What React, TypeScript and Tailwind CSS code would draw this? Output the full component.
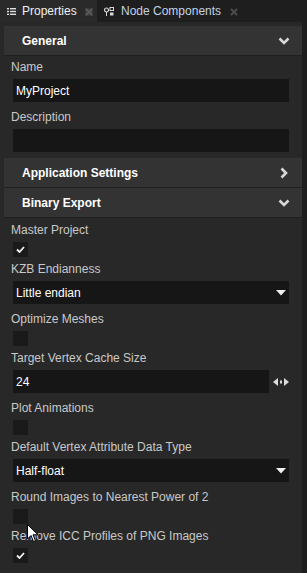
import type { ReactNode } from "react";

const FONT = { fontFamily: '"Liberation Sans", Arial, sans-serif' };

function ChevronDown() {
  return (
    <svg width="12" height="8" viewBox="0 0 12 8">
      <polyline points="1.5,1.5 6,6 10.5,1.5" fill="none" stroke="#d8d8d8" strokeWidth="2.6" />
    </svg>
  );
}

function ChevronRight() {
  return (
    <svg width="8" height="12" viewBox="0 0 8 12">
      <polyline points="1.5,1.5 6,6 1.5,10.5" fill="none" stroke="#d8d8d8" strokeWidth="2.6" />
    </svg>
  );
}

function Header({ title, open }: { title: string; open: boolean }) {
  return (
    <div className="ml-1 flex h-[30px] items-center justify-between border-b border-[#1f1f1f] bg-[#333333] pl-[18px] pr-3">
      <span className="text-[12px] font-bold text-white">{title}</span>
      <span className="flex w-3 justify-center">{open ? <ChevronDown /> : <ChevronRight />}</span>
    </div>
  );
}

function Label({ children }: { children: ReactNode }) {
  return <div className="mb-[2px] h-[19px] pl-[11px] text-[12px] leading-[19px] text-[#c8c8c8]">{children}</div>;
}

function TextProp({ label, value = "" }: { label: string; value?: string }) {
  return (
    <div className="mb-[6px]">
      <Label>{label}</Label>
      <div className="ml-[13px] flex h-[23px] w-[276px] items-center bg-[#161616] pl-[3px] text-[12px] text-white">
        {value}
      </div>
    </div>
  );
}

function SelectProp({ label, value }: { label: string; value: string }) {
  return (
    <div className="mb-[6px]">
      <Label>{label}</Label>
      <div className="ml-[13px] flex h-[23px] w-[276px] items-center justify-between bg-[#161616] pl-[3px] pr-[3px] text-[12px] text-white">
        <span>{value}</span>
        <svg width="10" height="6" viewBox="0 0 10 6">
          <polygon points="0,0 10,0 5,5.5" fill="#f0f0f0" />
        </svg>
      </div>
    </div>
  );
}

function CheckProp({ label, checked }: { label: string; checked: boolean }) {
  return (
    <div className="mb-[3px]">
      <Label>{label}</Label>
      <div className="ml-[13px] flex h-[15px] w-[15px] items-center justify-center bg-[#1a1a1a]">
        {checked && (
          <svg width="9" height="7" viewBox="0 0 9 7">
            <polyline points="1,3.5 3.5,6 8,1" fill="none" stroke="#f0f0f0" strokeWidth="1.8" />
          </svg>
        )}
      </div>
    </div>
  );
}

export default function App() {
  return (
    <div className="relative flex h-[573px] w-[307px] flex-col overflow-hidden bg-[#1e1e1e]" style={FONT}>
      {/* Tabs */}
      <div className="flex h-[22px] items-stretch text-[12px]">
        <div className="flex w-[97px] items-center bg-[#2a2a2a] pl-[7px]">
          <svg width="9" height="7" viewBox="0 0 9 7" className="mr-[6px]">
            <rect x="0" y="0" width="2" height="1.4" fill="#e0e0e0" />
            <rect x="3" y="0" width="6" height="1.4" fill="#e0e0e0" />
            <rect x="0" y="2.8" width="2" height="1.4" fill="#e0e0e0" />
            <rect x="3" y="2.8" width="6" height="1.4" fill="#e0e0e0" />
            <rect x="0" y="5.6" width="2" height="1.4" fill="#e0e0e0" />
            <rect x="3" y="5.6" width="6" height="1.4" fill="#e0e0e0" />
          </svg>
          <span className="text-[#f0f0f0]">Properties</span>
          <svg width="8" height="8" viewBox="0 0 8 8" className="ml-[8px] mt-[2px]">
            <rect width="8" height="8" fill="#3a3a3a" />
            <path d="M1,1 L7,7 M7,1 L1,7" stroke="#5a5a5a" strokeWidth="1.8" />
          </svg>
        </div>
        <div className="flex items-center pl-[7px]">
          <svg width="10" height="9" viewBox="0 0 10 9" className="mr-[7px]">
            <circle cx="2.5" cy="3" r="2" fill="none" stroke="#d8d8d8" strokeWidth="1.2" />
            <rect x="2" y="5" width="1" height="4" fill="#d8d8d8" />
            <rect x="6" y="0.5" width="3.5" height="3" fill="none" stroke="#d8d8d8" strokeWidth="1" />
            <rect x="6" y="5.5" width="3.5" height="3" fill="#d8d8d8" />
          </svg>
          <span className="text-[#c3d3e6]">Node Components</span>
          <svg width="8" height="8" viewBox="0 0 8 8" className="ml-[9px] mt-[2px]">
            <path d="M1,1 L7,7 M7,1 L1,7" stroke="#4e4e4e" strokeWidth="1.8" />
          </svg>
        </div>
      </div>

      <div className="flex flex-1">
        <div className="w-[302px] bg-[#282828] pt-1">
          <Header title="General" open />
          <div className="pt-[2px]">
            <TextProp label="Name" value="MyProject" />
            <TextProp label="Description" />
          </div>
          <Header title="Application Settings" open={false} />
          <Header title="Binary Export" open />
          <div className="pt-[3px]">
            <CheckProp label="Master Project" checked />
            <SelectProp label="KZB Endianness" value="Little endian" />
            <CheckProp label="Optimize Meshes" checked={false} />
            <div className="mb-[6px]">
              <Label>Target Vertex Cache Size</Label>
              <div className="ml-[13px] flex items-center">
                <div className="flex h-[23px] w-[256px] items-center bg-[#161616] pl-[3px] text-[12px] text-white">24</div>
                <svg width="16" height="8" viewBox="0 0 16 8" className="ml-[4px]">
                  <polygon points="0,4 5,0 5,8" fill="#dcdcdc" />
                  <rect x="7" y="2.5" width="2" height="3" fill="#dcdcdc" />
                  <polygon points="16,4 11,0 11,8" fill="#dcdcdc" />
                </svg>
              </div>
            </div>
            <CheckProp label="Plot Animations" checked={false} />
            <SelectProp label="Default Vertex Attribute Data Type" value="Half-float" />
            <CheckProp label="Round Images to Nearest Power of 2" checked={false} />
            <CheckProp label="Remove ICC Profiles of PNG Images" checked />
          </div>
        </div>
        <div className="w-[5px] bg-[#1e1e1e]" />
      </div>

      {/* mouse cursor */}
      <svg width="12" height="19" viewBox="0 0 12 19" className="absolute left-[27px] top-[524px]">
        <path d="M0.5,0.5 L0.5,15 L4,11.5 L6.5,17.5 L8.5,16.7 L6,10.8 L11,10.8 Z" fill="#ffffff" stroke="#000000" strokeWidth="1" />
      </svg>
    </div>
  );
}
